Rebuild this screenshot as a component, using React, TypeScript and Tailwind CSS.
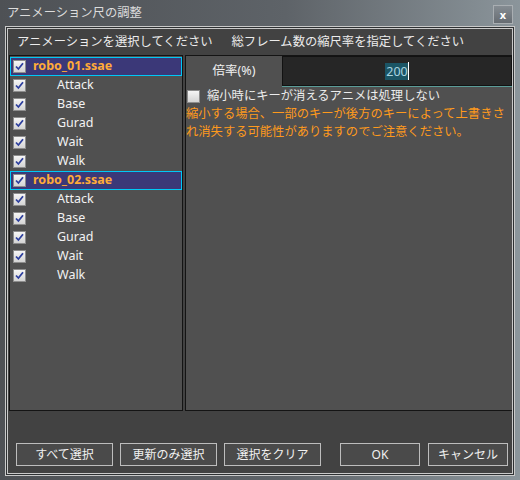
import React from "react";

const FONT = `"Noto Sans", "Noto Sans CJK JP", sans-serif`;

type Group = { file: string; anims: string[] };

const groups: Group[] = [
  { file: "robo_01.ssae", anims: ["Attack", "Base", "Gurad", "Wait", "Walk"] },
  { file: "robo_02.ssae", anims: ["Attack", "Base", "Gurad", "Wait", "Walk"] },
];

function CheckBox({ checked }: { checked: boolean }) {
  return (
    <span className="flex h-[13px] w-[13px] shrink-0 items-center justify-center border border-[#8d8d8d] bg-[linear-gradient(#f6f6f6,#d4d4d4)]">
      {checked ? (
        <svg width="9" height="9" viewBox="0 0 9 9">
          <path d="M1 4.5 L3.4 7 L8 1.2" fill="none" stroke="#2d3f9e" strokeWidth="1.8" />
        </svg>
      ) : null}
    </span>
  );
}

function Btn({ label, w }: { label: string; w: string }) {
  return (
    <div
      className={`flex h-[23px] ${w} items-center justify-center border border-[#bdbdbd] bg-[#4a4a4a] text-[12px] text-[#f0f0f0]`}
    >
      {label}
    </div>
  );
}

export default function App() {
  return (
    <div
      className="flex h-[480px] w-[520px] flex-col bg-[linear-gradient(to_right,#4e5155,#5e6368_55%,#8b959b)] px-[5px] pb-[4px]"
      style={{ fontFamily: FONT }}
    >
      {/* title bar */}
      <div className="flex h-[26px] shrink-0 items-center justify-between">
        <span className="pl-[2px] text-[12.3px] leading-none text-[#dcdcdc]">アニメーション尺の調整</span>
        <div className="mr-[2px] mt-[2px] flex h-[19px] w-[20px] items-center justify-center border border-[#a9aeb2] bg-[linear-gradient(#858c92,#666c72)] text-[11px] font-bold leading-none text-white">
          x
        </div>
      </div>

      {/* client frame */}
      <div className="flex min-h-0 flex-1 flex-col border border-[#c9c9c9] bg-[#2e3133] p-px">
        <div className="flex min-h-0 flex-1 flex-col border border-[#c9c9c9] bg-[#424242]">
          {/* header */}
          <div className="flex h-[26px] shrink-0 items-center pl-[9px] text-[12.3px] leading-none text-[#ececec]">
            <span>アニメーションを選択してください</span>
            <span className="ml-[19px]">総フレーム数の縮尺率を指定してください</span>
          </div>

          {/* panels */}
          <div className="flex h-[356px] shrink-0 gap-[2px] pl-px">
            {/* list */}
            <div className="flex w-[174px] flex-col border border-[#141414] bg-[#505050] pt-px">
              {groups.map((g) => (
                <React.Fragment key={g.file}>
                  <div className="flex h-[19px] items-center gap-[7px] border border-[#00c8f6] bg-[#3b3878] pl-[2px]">
                    <CheckBox checked />
                    <span className="text-[12.5px] font-bold leading-none text-[#ffab38]">{g.file}</span>
                  </div>
                  {g.anims.map((a) => (
                    <div key={a} className="flex h-[19px] items-center pl-[3px]">
                      <CheckBox checked />
                      <span className="ml-[31px] text-[12.5px] leading-none text-[#f2f2f2]">{a}</span>
                    </div>
                  ))}
                </React.Fragment>
              ))}
            </div>

            {/* settings */}
            <div className="flex flex-1 flex-col border border-[#141414] border-r-0 bg-[#505050]">
              <div className="flex h-[30px] shrink-0">
                <div className="flex w-[96px] items-center justify-center text-[12.5px] leading-none text-[#f0f0f0]">
                  倍率(%)
                </div>
                <div className="flex flex-1 items-center justify-center border border-[#121212] bg-[#262626] shadow-[0_1px_0_#5b9c98]">
                  <span className="bg-[#1b5565] pl-px text-[12.5px] leading-[17px] text-[#a8d4e0]">200</span>
                  <span className="h-[18px] w-px bg-white" />
                </div>
              </div>

              <div className="mt-px flex h-[18px] items-center pl-px">
                <CheckBox checked={false} />
                <span className="ml-[7px] text-[12.3px] leading-none text-[#ececec]">縮小時にキーが消えるアニメは処理しない</span>
              </div>

              <div className="text-[12.3px] leading-[18px] text-[#ff9a1c]">
                縮小する場合、一部のキーが後方のキーによって上書きさ
                <br />
                れ消失する可能性がありますのでご注意ください。
              </div>
            </div>
          </div>

          {/* buttons */}
          <div className="mt-auto flex items-center pb-[7px] pl-[8px]">
            <Btn label="すべて選択" w="w-[97px]" />
            <div className="ml-[7px]">
              <Btn label="更新のみ選択" w="w-[97px]" />
            </div>
            <div className="ml-[7px]">
              <Btn label="選択をクリア" w="w-[97px]" />
            </div>
            <div className="ml-[19px]">
              <Btn label="OK" w="w-[80px]" />
            </div>
            <div className="ml-[8px]">
              <Btn label="キャンセル" w="w-[80px]" />
            </div>
          </div>
        </div>
      </div>
    </div>
  );
}
